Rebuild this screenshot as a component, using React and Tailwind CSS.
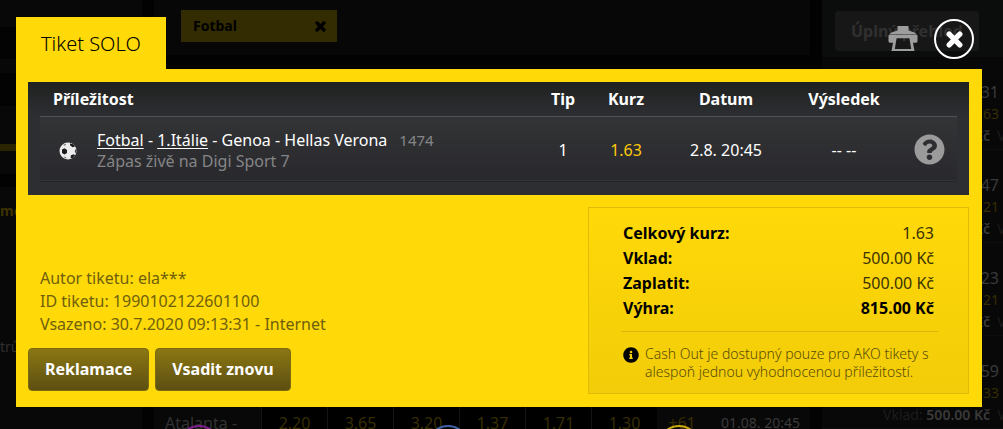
import { FaQuestionCircle, FaInfoCircle } from "react-icons/fa";

const odds = ["2.20", "3.65", "3.20", "1.37", "1.71", "1.30"];

const recent = [
  { time: "31", rate: ".63" },
  { time: "47", rate: ".21" },
  { time: "23", rate: ".21" },
  { time: "59", rate: ".33" },
];

const totals = [
  { label: "Celkový kurz:", value: "1.63" },
  { label: "Vklad:", value: "500.00 Kč" },
  { label: "Zaplatit:", value: "500.00 Kč" },
  { label: "Výhra:", value: "815.00 Kč", strong: true },
];

function CrossIcon({ className }) {
  return (
    <svg viewBox="0 0 16 16" className={className} aria-hidden="true">
      <path d="M3 3l10 10M13 3l-10 10" stroke="currentColor" strokeWidth="5" strokeLinecap="round" />
    </svg>
  );
}

function PrinterIcon() {
  return (
    <svg viewBox="0 0 30 26" className="h-[26px] w-[30px]" aria-hidden="true">
      <path fill="#9d9d9d" d="M9.500 0h11v4.500l6 2 2 1.500h-27l2-1.500 6-2z" />
      <path
        fill="#9d9d9d"
        fillRule="evenodd"
        d="M2 8.600h26c1 0 1.500 .5 1.500 1.500V15c0 1-.5 1.700-1.500 1.700h-3L26.500 25h-23L5 16.700H2c-1 0-1.500-.7-1.500-1.700v-4.900C.5 9.100 1 8.600 2 8.600zM8.600 12.200L6.800 23h16.400l-1.800-10.800z"
      />
    </svg>
  );
}

function BallIcon() {
  return (
    <svg viewBox="0 0 18 18" className="h-[18px] w-[18px]" aria-hidden="true">
      <circle cx="9" cy="9" r="8.500" fill="#ececec" />
      <path fill="#1d1d1d" d="M3 7.500L5.500 6.200 8 8v3l-2.500 1.500L3 11z" />
      <path fill="#1d1d1d" d="M11 1.200l3.500 1.400 1.500 2-2.500.6-2.500-2z" />
      <path fill="#444" d="M16.200 7l1.300 1.500-.5 3-1.200-1.500z" />
      <path fill="#1d1d1d" d="M12 13.200l3-1 1 1.200-2.200 2.700-2.300.2z" />
      <path fill="#777" d="M4.500 14.500l2.200.4 1 1.600-1.800-.4z" />
      <path fill="#777" d="M4.500 2.800l2-1 .8.700-2.300 1.500z" />
    </svg>
  );
}

function Backdrop() {
  return (
    <div className="absolute inset-0 flex gap-3 overflow-hidden bg-[#020202] whitespace-nowrap">
      <div className="flex w-[142px] shrink-0 flex-col bg-[#080808]">
        <div className="h-[27px]" />
        <div className="h-8 bg-[#030303]" />
        <div className="h-[14px]" />
        <div className="h-[33px] bg-[#030303]" />
        <div className="h-[38px]" />
        <div className="h-[7px] bg-[#2b2400]" />
        <div className="h-[23px]" />
        <div className="h-[13px] bg-[#020202]" />
        <div className="pt-3 text-sm leading-6 font-bold text-[#3d3300]">me</div>
        <div className="pt-[112px] text-sm leading-6 text-[#303030]">trů</div>
      </div>

      <div className="flex min-w-0 flex-1 flex-col justify-between">
        <div className="h-[55px] bg-[#070707] px-[27px] pt-[10px]">
          <button className="flex h-8 w-[156px] items-center justify-between bg-[#332b01] pr-[11px] pl-3 text-sm font-bold text-black">
            Fotbal
            <CrossIcon className="h-[11px] w-[11px]" />
          </button>
        </div>
        <div className="flex h-[29px] overflow-hidden bg-black text-base leading-6">
          <div className="w-[107px] bg-[#080808] pt-[11px] pl-[11px] text-[#323232]">Atalanta -</div>
          {odds.map((o) => (
            <div key={o} className="w-[66px] border-l border-[#141414] pt-[11px] text-center text-[#362d02]">
              {o}
            </div>
          ))}
          <div className="w-[50px] bg-[#080808] pt-[11px] text-center text-[#362d02]">+61</div>
          <div className="flex-1 bg-[#080808] pt-[11px] pl-[14px] text-sm leading-6 text-[#3a3a3a]">01.08. 20:45</div>
        </div>
      </div>

      <div className="flex w-[181px] shrink-0 flex-col bg-[#080808]">
        <div className="h-[68px] bg-[#0a0d0c] pt-[11px] pl-[13px]">
          <button className="h-10 w-36 rounded bg-[#171717] text-base font-bold text-[#303030]">
            Úplný přehled
          </button>
        </div>
        {recent.map((r) => (
          <div key={r.time} className="h-[93px] shrink-0 border-b border-[#0e0e0e] pt-6">
            <div className="pr-1 text-right text-base leading-[22px] text-[#3a3a3a]">{r.time}</div>
            <div className="pr-1 text-right text-sm leading-[22px] text-[#362d02]">{r.rate}</div>
            <div className="overflow-hidden pl-[61px] text-sm leading-[22px] text-[#1c1c1c]">
              Vklad: <span className="font-semibold text-[#3a3a3a]">500.00 Kč</span>&nbsp; V
            </div>
          </div>
        ))}
      </div>

      <svg viewBox="0 0 540 5" className="absolute bottom-0 left-[180px] h-[5px] w-[540px]" aria-hidden="true">
        <g fill="none" strokeWidth="2">
          <circle cx="19" cy="22" r="20" stroke="#7d1f8d" />
          <circle cx="268" cy="22" r="20" stroke="#3f62a5" />
          <circle cx="499" cy="22" r="20" stroke="#c9aa08" />
        </g>
      </svg>
    </div>
  );
}

function BetTable() {
  return (
    <div className="bg-linear-to-b from-[#1f2220] via-[#2d2e32] via-30% to-[#2d2e32] px-3 pb-[13px]">
      <table className="w-full table-fixed border-collapse text-base text-white">
        <colgroup>
          <col />
          <col className="w-12" />
          <col className="w-[78px]" />
          <col className="w-[122px]" />
          <col className="w-[114px]" />
          <col className="w-14" />
        </colgroup>
        <thead>
          <tr className="h-[34px] border-b border-[#505154] font-bold">
            <th className="pl-[13px] text-left">Příležitost</th>
            <th>Tip</th>
            <th>Kurz</th>
            <th>Datum</th>
            <th>Výsledek</th>
            <th aria-label="Stav" />
          </tr>
        </thead>
        <tbody>
          <tr className="h-[65px] border-b border-[#222326] bg-linear-to-b from-[#333436] to-[#29292d] text-center">
            <td>
              <div className="flex items-center gap-5 pt-1 pl-[19px] text-left leading-[21px]">
                <BallIcon />
                <div>
                  <div>
                    <a href="#fotbal" className="underline underline-offset-2">Fotbal</a> -{" "}
                    <a href="#italie" className="underline underline-offset-2">1.Itálie</a> - Genoa - Hellas Verona
                    <span className="ml-3 text-[15px] text-[#858587]">1474</span>
                  </div>
                  <div className="text-[#858587]">Zápas živě na Digi Sport 7</div>
                </div>
              </div>
            </td>
            <td className="pt-0.5">1</td>
            <td className="pt-0.5 text-[#fdc90b]">1.63</td>
            <td className="pt-0.5">2.8. 20:45</td>
            <td className="pt-0.5">-- --</td>
            <td className="pt-0.5">
              <FaQuestionCircle className="mx-auto h-[31px] w-[31px] text-[#9b9b9b]" />
            </td>
          </tr>
        </tbody>
      </table>
    </div>
  );
}

function ActionButton({ children }) {
  return (
    <button className="h-[43px] rounded border border-[#7a6a12] bg-linear-to-b from-[#8b7712] to-[#5d4f12] px-4 text-base font-bold text-white">
      {children}
    </button>
  );
}

function Summary() {
  return (
    <section className="w-[381px] border border-[#dfbc08] bg-linear-to-b from-[#ffd908] to-[#f2cc08] pt-[13px] pr-[30px] pb-3 pl-8">
      <dl className="pr-1 pl-0.5 text-base leading-[25px] text-black">
        {totals.map((t) => (
          <div key={t.label} className="flex justify-between">
            <dt className="font-bold">{t.label}</dt>
            <dd className={t.strong ? "font-bold" : "text-[#3b3204]"}>{t.value}</dd>
          </div>
        ))}
      </dl>
      <div className="mt-[10px] flex gap-[6px] border-t border-[#d9b708] pt-[13px] pl-0.5 text-sm leading-[18px] font-light text-[#594b08]">
        <FaInfoCircle className="mt-0.5 h-4 w-4 shrink-0 text-black" />
        <p>Cash Out je dostupný pouze pro AKO tikety s alespoň jednou vyhodnocenou příležitostí.</p>
      </div>
    </section>
  );
}

export default function App() {
  return (
    <div className="relative min-h-screen overflow-hidden font-['Noto_Sans','Open_Sans',sans-serif]">
      <Backdrop />
      <main className="relative pt-[17px] pr-[21px] pb-[22px] pl-4">
        <div className="flex items-start justify-between">
          <h1 className="h-[52px] bg-[#ffd908] px-[25px] text-xl leading-[54px] font-light text-black">Tiket SOLO</h1>
          <div className="flex items-center gap-4 pt-0.5 pr-2">
            <button aria-label="Tisk">
              <PrinterIcon />
            </button>
            <button
              aria-label="Zavřít"
              className="flex h-10 w-10 items-center justify-center rounded-full border-2 border-white text-white"
            >
              <CrossIcon className="h-[17px] w-[17px]" />
            </button>
          </div>
        </div>
        <div className="bg-[#ffd908] px-3 pt-[13px] pr-[13px] pb-[13px]">
          <BetTable />
          <div className="flex justify-between pt-3">
            <div className="flex flex-col justify-end pb-[3px]">
              <div className="pl-3 text-base leading-[23px] text-[#6f5f0c]">
                <p>Autor tiketu: ela***</p>
                <p>ID tiketu: 1990102122601100</p>
                <p>Vsazeno: 30.7.2020 09:13:31 - Internet</p>
              </div>
              <div className="flex gap-[6px] pt-3">
                <ActionButton>Reklamace</ActionButton>
                <ActionButton>Vsadit znovu</ActionButton>
              </div>
            </div>
            <Summary />
          </div>
        </div>
      </main>
    </div>
  );
}
